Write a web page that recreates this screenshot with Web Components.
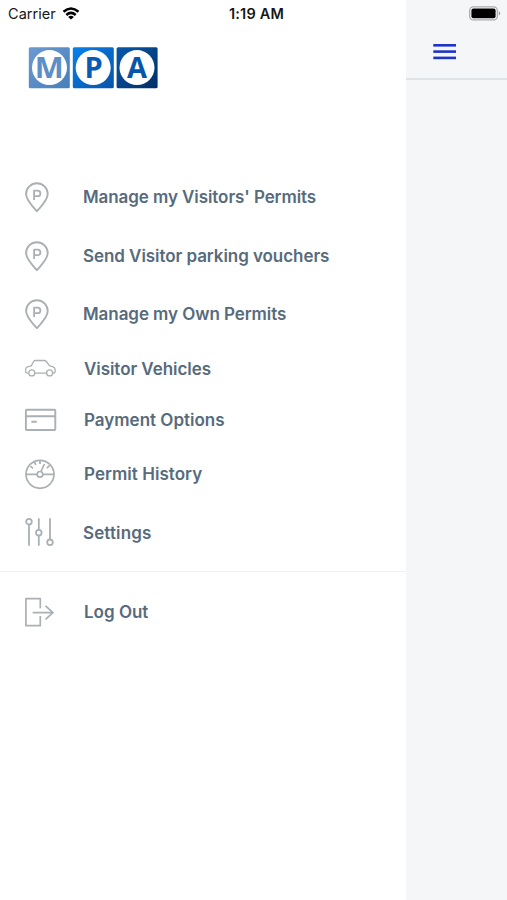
<!DOCTYPE html>
<html lang="en"><head><meta charset="utf-8"><title>MPA</title>
<style>
html,body{margin:0;height:100%;overflow:hidden}
body{font-family:Inter,"Liberation Sans",sans-serif;background:#fff}
</style></head><body>
<mpa-app></mpa-app>
<script>
const define=(name,html)=>customElements.define(name,class extends HTMLElement{
  constructor(){super();this.attachShadow({mode:'open'}).innerHTML=html;}
});
const pin='<path d="M12.9 31.2C8 25.5 2.1 20 2.1 14A10.8 10.8 0 0 1 23.7 14C23.7 20 17.8 25.5 12.9 31.2Z" stroke-width="1.9"/><path d="M10.1 20V10.6h3.5a2.8 2.8 0 0 1 0 5.6h-3.5" stroke-width="1.8"/>';
const icons={
  pin,
  car:'<g stroke-width="1.3"><path d="M4.6 21.1H3Q1.6 20.8 1.6 19V17.2Q1.7 15.6 3.4 14.9L7.2 13.9 9.6 9.5Q10.3 8.5 11.5 8.5H20.2Q21.5 8.5 22.3 9.5L25.4 13.6 29.2 14.8Q31.2 15.8 31.2 18V19.4Q31.1 21.1 29.8 21.1H29M10.9 21.1H22.4"/><circle cx="7.8" cy="20.9" r="3"/><circle cx="25.6" cy="20.9" r="3"/></g>',
  card:'<g stroke-width="1.9"><rect x="1.9" y="6.8" width="29.4" height="20.2" rx=".8"/><path d="M2 13.2H31M7.4 18.8H12.8"/></g>',
  gauge:'<g stroke-width="1.7"><circle cx="16" cy="17.3" r="14"/><circle cx="16" cy="17.3" r="2.8"/><path d="M2 17.3H13.2M18.8 17.3H30M16 3.5V7M17 14.5L20.4 7M6.5 9.1L9 11.5M10.4 5L11.8 7.8M25.6 8.5L22.9 11.2"/></g>',
  sliders:'<g stroke-width="1.8"><circle cx="5" cy="5.7" r="2.8"/><path d="M5 8.5V29.7M14.8 2.3V13.9M14.8 19.5V29.7M26 2.3V23.5"/><circle cx="14.8" cy="16.7" r="2.8"/><circle cx="26" cy="26.3" r="2.8"/></g>',
  logout:'<g stroke-width="1.7"><path d="M16.3 13.3V3.6H1.9V30.7H16.3V21M8.7 17.6H28.5M21.5 10.8L29 17.6 21.5 24.4"/></g>'
};
define('app-logo',`<style>:host{display:block;height:42px}svg{display:block}text{font:700 29px "Open Sans","Noto Sans",sans-serif;text-anchor:middle}</style>
<svg width="130" height="42"><defs>
<linearGradient id="a" x2="1" y2="1"><stop stop-color="#6b9ad0"/><stop offset="1" stop-color="#477fbc"/></linearGradient>
<linearGradient id="b" x2="1" y2="1"><stop stop-color="#0880ec"/><stop offset="1" stop-color="#0754a8"/></linearGradient>
<linearGradient id="c" x2="1" y2="1"><stop stop-color="#0758ac"/><stop offset="1" stop-color="#032e66"/></linearGradient></defs>
<rect x=".8" y=".2" width="41" height="41" rx="1.5" fill="url(#a)"/><rect x="44.8" y=".2" width="41" height="41" rx="1.5" fill="url(#b)"/><rect x="88.6" y=".2" width="41" height="41" rx="1.5" fill="url(#c)"/>
<g fill="#fff"><circle cx="21.5" cy="20.6" r="17.5"/><circle cx="65.2" cy="20.6" r="17.5"/><circle cx="109" cy="20.6" r="17.5"/></g>
<text x="21.3" y="30.9" fill="#5d8ec8" textLength="29" lengthAdjust="spacingAndGlyphs">M</text><text x="65.7" y="30.9" fill="#075ab5">P</text><text x="109" y="30.9" fill="#0756ac">A</text></svg>`);
define('status-bar',`<style>:host{display:grid;grid-template-columns:1fr auto 1fr;align-items:center;height:28px;box-sizing:border-box;padding:0 6px 0 8px;font-size:14.5px;line-height:18px;color:#171717}
.l{display:flex;align-items:center;gap:6px}.carrier{letter-spacing:.05px}.time{font-weight:600;letter-spacing:.2px;margin-left:4px}svg{display:block}.l svg{margin-bottom:2px}.r{justify-self:end;margin-bottom:2px}</style>
<span class="l"><span class="carrier">Carrier</span><svg width="18" height="13" viewBox="0 0 17 13" fill="none" stroke="#000" stroke-width="2.6"><path d="M1 4.7Q8.5-1.7 16 4.7M3.8 7.9Q8.5 3.9 13.2 7.9"/><path d="M8.5 12.6L5.6 9.9Q8.5 7.4 11.4 9.9Z" fill="#000" stroke="none"/></svg></span>
<span class="time">1:19 AM</span>
<svg class="r" width="32" height="15" viewBox="0 0 32 15"><rect x=".7" y=".9" width="27.6" height="13" rx="3.6" fill="#fff" stroke="#aaa" stroke-width="1.3"/><rect x="2.4" y="2.6" width="24.2" height="9.6" rx="2" fill="#000"/><path d="M29.8 5.2Q32.6 7.4 29.8 9.6Z" fill="#999"/></svg>`);
customElements.define('menu-item',class extends HTMLElement{
  connectedCallback(){
    if(this.shadowRoot)return;
    this.attachShadow({mode:'open'}).innerHTML=`<style>:host{display:flex;align-items:center;padding-left:24px;color:#576b7c;font-weight:600;font-size:17px;line-height:22px;white-space:nowrap}svg{flex:none;width:34px;height:34px;margin-right:25px;fill:none;stroke:#abb0b4;stroke-linejoin:round}:host([inset]) svg{margin-right:26px}</style>
<svg viewBox="0 0 34 34">${icons[this.getAttribute('icon')]}</svg><span><slot></slot></span>`;
  }
});
define('side-menu',`<style>:host{display:flex;flex-direction:column;width:406px;background:#fff;box-sizing:border-box;padding-top:47px}
app-logo{margin:0 0 79px 28px}hr{width:100%;height:1px;border:0;margin:10px 0 0;background:#f0f0f2}</style>
<app-logo></app-logo>
<menu-item icon="pin" style="height:58px;letter-spacing:-.08px">Manage my Visitors' Permits</menu-item>
<menu-item icon="pin" style="height:59px;letter-spacing:-.06px">Send Visitor parking vouchers</menu-item>
<menu-item icon="pin" style="height:58px;letter-spacing:-.07px">Manage my Own Permits</menu-item>
<menu-item inset icon="car" style="height:52px;letter-spacing:-.06px">Visitor Vehicles</menu-item>
<menu-item inset icon="card" style="height:49px">Payment Options</menu-item>
<menu-item inset icon="gauge" style="height:60px;letter-spacing:.05px">Permit History</menu-item>
<menu-item icon="sliders" style="height:57px;letter-spacing:.12px">Settings</menu-item>
<hr>
<menu-item inset icon="logout" style="height:80px">Log Out</menu-item>`);
define('page-peek',`<style>:host{display:block;flex:1;background:#f4f6f8}header{height:80px;box-sizing:border-box;border-bottom:2px solid #e0e3e5;padding:44px 0 0 27px}svg{display:block}</style>
<header><svg width="24" height="16"><g fill="#1c34c8"><rect x=".3" y="0" width="22.7" height="2.6"/><rect x=".3" y="6.3" width="22.7" height="2.6"/><rect x=".3" y="12.6" width="22.7" height="2.6"/></g></svg></header>`);
define('mpa-app',`<style>:host{display:flex;position:relative;width:507px;height:900px}status-bar{position:absolute;top:0;left:0;width:100%}</style>
<side-menu></side-menu><page-peek></page-peek><status-bar></status-bar>`);
</script></body></html>
